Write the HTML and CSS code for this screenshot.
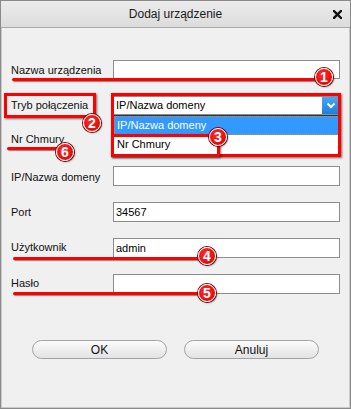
FILE: index.html
```html
<!DOCTYPE html>
<html lang="pl">

<head>
    <meta charset="UTF-8">
    <meta name="viewport" content="width=device-width, initial-scale=1.0">
    <title>Dodaj urządzenie</title>
    <link rel="stylesheet" href="styles.css">
</head>

<body>
    <div class="window">
        <div class="titlebar">
            <span></span>
            <span class="title">Dodaj urządzenie</span>
            <span class="close">
                <svg width="9" height="9" viewBox="0 0 9 9">
                    <path d="M1 1 L8 8 M8 1 L1 8" stroke="#111" stroke-width="2.4" stroke-linecap="square" />
                </svg>
            </span>
        </div>

        <div class="form">
            <div class="row r1">
                <label>Nazwa urządzenia</label>
                <div class="field"></div>
            </div>
            <div class="row r2">
                <label class="lbl-tryb">Tryb połączenia</label>
                <div class="select">
                    <span>IP/Nazwa domeny</span>
                    <i class="arrow">
                        <svg width="10" height="7" viewBox="0 0 10 7">
                            <path d="M1.5 1.5 L5 5 L8.5 1.5" fill="none" stroke="#fff" stroke-width="2" />
                        </svg>
                    </i>
                    <ul class="dropdown">
                        <li class="hover">IP/Nazwa domeny</li>
                        <li>Nr Chmury</li>
                    </ul>
                </div>
            </div>
            <div class="row r3">
                <label class="lbl-nr">Nr Chmury</label>
                <div class="field"></div>
            </div>
            <div class="row r4">
                <label class="lbl-ip">IP/Nazwa domeny</label>
                <div class="field"></div>
            </div>
            <div class="row">
                <label>Port</label>
                <div class="field">34567</div>
            </div>
            <div class="row">
                <label class="lbl-low">Użytkownik</label>
                <div class="field">admin</div>
            </div>
            <div class="row">
                <label class="lbl-low">Hasło</label>
                <div class="field"></div>
            </div>

            <div class="buttons">
                <button>OK</button>
                <button>Anuluj</button>
            </div>
        </div>

        <!-- adnotacje -->
        <div class="line line1"></div>
        <div class="line line6"></div>
        <div class="line line4"></div>
        <div class="line line5"></div>
        <div class="frame frame-tryb"></div>
        <div class="frame frame-select"></div>
        <div class="frame frame-nr"></div>
        <div class="badge b1">1</div>
        <div class="badge b2">2</div>
        <div class="badge b3">3</div>
        <div class="badge b4">4</div>
        <div class="badge b5">5</div>
        <div class="badge b6">6</div>
    </div>
</body>

</html>
```

FILE: styles.css
```css
* {
    margin: 0;
    padding: 0;
    box-sizing: border-box;
}

body {
    font-family: "Liberation Sans", Arial, sans-serif;
    font-size: 11px;
    color: #000;
}

.window {
    width: 351px;
    height: 409px;
    position: relative;
    background-color: #f0f0f0;
    border: 1px solid #8a8a8a;
    box-shadow: inset 0 0 0 1px #c9c9c9;
}

.titlebar {
    height: 27px;
    display: grid;
    grid-template-columns: 1fr auto 1fr;
    align-items: center;
    background: linear-gradient(#ececec, #dcdcdc);
    border-bottom: 1px solid #a9a9a9;
}

.title {
    font-size: 12px;
    color: #1a1a1a;
    line-height: 26px;
}

.close {
    justify-self: end;
    margin-right: 8px;
    display: flex;
    margin-top: 1px;
}

.form {
    padding: 32px 0 0 10px;
}

.row {
    display: flex;
    height: 20px;
    margin-bottom: 16px;
}

.r2,
.r3 {
    margin-bottom: 15px;
}

.row label {
    width: 102px;
    padding-top: 3px;
    line-height: 14px;
    color: #111;
}

.row label.lbl-ip {
    padding-top: 4px;
}

.row label.lbl-tryb {
    padding-top: 2px;
}

.row label.lbl-nr {
    padding-top: 1px;
}

.row label.lbl-low {
    padding-top: 2px;
}

.field {
    width: 227px;
    height: 20px;
    background-color: #fff;
    border: 1px solid #8c8c8c;
    padding-left: 2px;
    line-height: 18px;
}

.r1 .field {
    height: 19px;
}

.select {
    width: 227px;
    height: 19px;
    position: relative;
    background-color: #fff;
    border: 1px solid #8c8c8c;
    padding-left: 2px;
    line-height: 17px;
    display: flex;
    justify-content: space-between;
}

.arrow {
    width: 17px;
    height: 17px;
    background: linear-gradient(#4aa6f5, #1c7fde);
    display: flex;
    justify-content: center;
    align-items: center;
}

.dropdown {
    position: absolute;
    left: -1px;
    top: 18px;
    width: 227px;
    list-style: none;
    background-color: #fff;
    border: 1px solid #333;
    z-index: 2;
}

.dropdown li {
    height: 19px;
    line-height: 17px;
    padding-left: 2px;
    border: 1px dotted transparent;
}

.dropdown li.hover {
    background-color: #3399ff;
    color: #fff;
    border-color: #d68a3c;
}

.buttons {
    display: flex;
    justify-content: center;
    gap: 17px;
    margin: 46px 0 0 -10px;
}

.buttons button {
    width: 135px;
    height: 19px;
    border: 1px solid #a3a3a3;
    border-radius: 10px;
    background: linear-gradient(#fbfbfb, #e3e3e3);
    font-family: "Liberation Sans", Arial, sans-serif;
    font-size: 12px;
    color: #111;
}

/* adnotacje na zrzucie */
.line {
    position: absolute;
    height: 3px;
    background-color: #f00;
    border-radius: 2px;
    box-shadow: 1px 1px 1px rgba(0, 0, 0, .45);
    z-index: 5;
}

.line1 {
    left: 11px;
    top: 77px;
    width: 312px;
}

.line6 {
    left: 6px;
    top: 146px;
    width: 58px;
}

.line4 {
    left: 12px;
    top: 256px;
    width: 194px;
}

.line5 {
    left: 12px;
    top: 291px;
    width: 194px;
}

.frame {
    position: absolute;
    border: 3px solid #f00;
    box-shadow: 1px 1px 2px rgba(0, 0, 0, .55);
    z-index: 5;
}

.frame-tryb {
    left: 3px;
    top: 92px;
    width: 92px;
    height: 25px;
}

.frame-select {
    left: 110px;
    top: 92px;
    width: 230px;
    height: 64px;
}

.frame-nr {
    left: 110px;
    top: 133px;
    width: 109px;
    height: 23px;
}

.badge {
    position: absolute;
    width: 18px;
    height: 18px;
    border-radius: 50%;
    background: radial-gradient(circle at 40% 35%, #ff2a2a, #d80000);
    border: 1px solid #fff;
    box-shadow: 0 0 0 1px #7a0000, 1px 1px 2px rgba(0, 0, 0, .5);
    color: #fff;
    font-weight: bold;
    font-size: 14px;
    line-height: 16px;
    text-align: center;
    z-index: 6;
}

.b1 {
    left: 314px;
    top: 67px;
}

.b2 {
    left: 82px;
    top: 113px;
}

.b3 {
    left: 208px;
    top: 127px;
}

.b4 {
    left: 197px;
    top: 246px;
}

.b5 {
    left: 197px;
    top: 283px;
}

.b6 {
    left: 55px;
    top: 142px;
}
```
